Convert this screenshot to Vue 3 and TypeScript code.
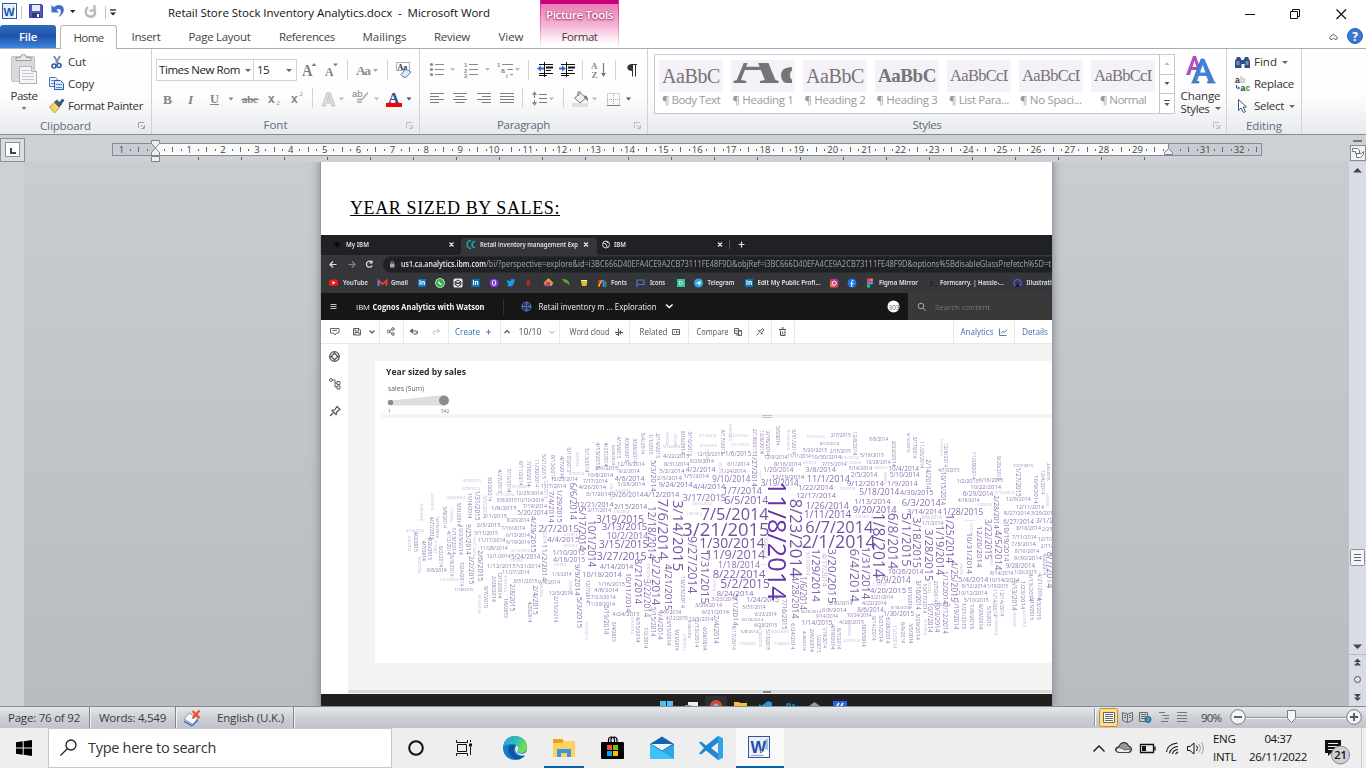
<script setup lang="ts">
type Word = { t: string; x: number; y: number; len: number; v: boolean; size: number; fill: string; weight: number }

// Stretches or tightens the letter spacing so a label takes a given width.
const vFit = {
  mounted(el: HTMLElement, binding: { value: number }) {
    const w = el.getBoundingClientRect().width
    const n = (el.textContent || '').length
    if (n > 0) el.style.letterSpacing = ((binding.value - w) / n).toFixed(3) + 'px'
  },
}

const tabs = [
  { name: 'Insert', w: 29, slot: 58 },
  { name: 'Page Layout', w: 62, slot: 89 },
  { name: 'References', w: 56, slot: 86 },
  { name: 'Mailings', w: 44, slot: 69 },
  { name: 'Review', w: 36, slot: 66 },
  { name: 'View', w: 25, slot: 52 },
]

const styleItems = [
  { sample: 'AaBbC', label: '¶ Body Text', w: 58, cls: 's1', sw: 58 },
  { sample: 'Aa', label: '¶ Heading 1', w: 61, cls: 's2', sw: 82 },
  { sample: 'AaBbC', label: '¶ Heading 2', w: 61, cls: 's1', sw: 58 },
  { sample: 'AaBbC', label: '¶ Heading 3', w: 61, cls: 's3', sw: 58 },
  { sample: 'AaBbCcD', label: '¶ List Para...', w: 60, cls: 's4', sw: 64 },
  { sample: 'AaBbCcD', label: '¶ No Spaci...', w: 62, cls: 's4', sw: 64 },
  { sample: 'AaBbCcD', label: '¶ Normal', w: 46, cls: 's4', sw: 64 },
]

const unit = 33.87
const zero = 155.3
const rulerNums = Array.from({ length: 34 }, (_, i) => i - 1).filter((i) => i !== 0 && i !== 30 && i < 33)
const halves = Array.from({ length: 34 }, (_, i) => zero + (i - 0.5) * unit).filter((x) => x < 1259)
const dots = Array.from({ length: 68 }, (_, i) => zero + (i / 2 - 0.75) * unit).filter((x) => x < 1250)
const tabTicks = Array.from({ length: 23 }, (_, i) => 198.5 + i * 43)

function parse(src: string, v: boolean, faint: boolean): Word[] {
  return src
    .trim()
    .split(/\s*;\s*/)
    .filter(Boolean)
    .map((s) => {
      const [t, x, y, len] = s.split(' ')
      const L = Number(len)
      const em = t.replace(/\//g, '').length * 0.572 + 2 * 0.367
      const fill = faint ? '#c2b7d4' : L > 300 ? '#6533ab' : L > 190 ? '#7650a3' : L > 130 ? '#8160ab' : L > 95 ? '#8a70b2' : '#9079b5'
      return { t, x: Number(x), y: Number(y), len: L, v, size: L / em, fill, weight: L > 300 ? 500 : 400 }
    })
}

const clusters = [
  {
    x: 400,
    words: [
      ...parse(`12/25/2014 347 219 82;5/8/2015 290 242 60;10/10/2014 352 241 80;1/8/2015 273 263 77;7/19/2014 368 259 73;2/1/2015 249 288 72;5/20/2014 352 277 92;8/20/2014 320 302 68;2/3/2015 230 314 72;7/16/2014 303 325 72;3/11/2015 222 340 72;6/13/2014 318 345 72;11/17/2014 234 359 82;6/19/2014 318 367 72;11/28/2014 241 385 82;12/1/2014 260 409 72;5/24/2014 333 411 88;1/12/2015 260 438 87;7/21/2014 347 438 75;11/27/2014 307 457 82;3/31/2015 340 484 72;9/4/2014 414 487 66;11/7/2014 422 199 76;12/23/2014 453 178 80;2/7/2015 415 324 122;4/4/2015 442 358 96;1/10/2015 458 397 97;4/16/2015 460 418 95;1/3/2014 457 462 58;12/3/2014 447 520 72;10/18/2014 547 463 118;10/8/2014 562 165 77;7/17/2014 549 184 74;4/26/2014 536 202 82;3/1/2014 557 222 77;12/21/2014 529 254 112;2/17/2014 563 272 70;3/19/2015 588 297 144;3/13/2015 605 321 137;10/2/2014 620 347 125;3/15/2015 596 373 150;3/27/2015 590 408 150;4/14/2014 600 440 100;1/16/2015 595 492 80;4/8/2014 583 510 72;7/23/2014 572 532 75;11/29/2014 563 553 82;4/24/2015 637 581 82;2/6/2015 585 145 70;9/8/2014 80 450 60;1/18/2015 163 508 58`, false, false),
      ...parse(`4/18/2015 188 183 55;5/28/2014 185 206 55;4/25/2014 140 233 55;4/14/2015 18 332 55;12/3/2014 118 480 58;5/17/2014 288 224 55;3/13/2015 335 199 55;2/13/2014 333 391 56;5/13/2014 492 345 40;5/13/2014 492 378 40;8/9/2014 508 161 45;2/3/2014 330 424 36;2/9/2014 462 435 36`, false, true),
      ...parse(`3/20/2014 270 170 75;4/27/2015 299 148 72;7/10/2014 325 145 72;6/11/2014 362 122 75;7/16/2014 387 122 78;11/30/2014 412 118 84;5/21/2015 433 102 75;9/13/2014 458 104 75;4/7/2014 485 108 68;5/17/2015 508 82 75;6/6/2014 519 188 112;5/13/2014 559 85 72;4/13/2015 594 66 80;4/27/2014 616 68 72;1/31/2015 232 211 90;11/14/2014 208 218 78;5/31/2014 177 248 70;3/9/2014 134 258 66;4/27/2015 94 290 70;12/15/2014 114 288 66;4/26/2015 90 350 70;1/13/2014 163 322 82;10/23/2014 184 315 90;9/25/2014 204 312 92;4/12/2014 145 333 72;4/2/2015 47 335 60;4/7/2014 70 362 60;6/2/2014 122 378 64;6/9/2014 155 405 65;7/24/2014 187 425 75;2/2/2015 214 408 84;2/6/2015 242 390 94;7/4/2014 456 213 95;1/29/2015 479 208 100;4/29/2015 401 288 110;11/2/2014 436 372 112;5/17/2014 548 260 132;10/1/2014 576 300 142;9/9/2014 532 432 95;2/28/2014 282 468 78;12/12/2014 298 456 78;9/7/2015 258 498 66;1/6/2015 318 534 60;2/8/2015 338 492 82;4/29/2014 388 545 62;2/4/2015 407 496 88;2/15/2014 467 528 80;5/3/2015 540 530 94;12/7/2014 562 480 68;5/19/2014 618 555 88;5/4/2015 640 605 60`, true, false),
      ...parse(`2/23/2014 98 220 50;7/26/2014 65 250 52;10/31/2014 222 348 60;2/15/2015 558 605 55;3/1/2015 253 225 60;3/7/2014 437 180 55;5/9/2014 532 95 45;1/1/2014 315 465 50;1/3/2014 153 262 45;6/4/2014 28 348 45;8/4/2014 57 410 50;7/7/2014 105 360 40;8/1/2014 240 525 54;2/6/2014 434 315 55;7/8/2014 510 480 40;1/6/2014 424 490 40`, true, true),
    ],
  },
  {
    x: 600,
    words: [
      ...parse(`12/18/2014 52 131 82;9/2/2014 55 153 64;4/6/2014 44 174 90;1/28/2014 52 192 83;9/26/2014 36 225 95;4/12/2014 132 222 106;2/15/2014 42 259 100;4/22/2015 190 108 78;8/31/2014 192 132 76;5/2/2014 178 152 76;2/3/2014 170 172 76;9/24/2014 176 194 102;8/29/2014 270 124 72;4/2/2014 257 148 90;1/5/2014 250 168 77;4/4/2014 279 199 97;12/13/2015 290 104 80;1/6/2015 375 100 78;6/1/2014 382 131 66;1/24/2014 364 153 74;9/10/2014 337 176 114;1/7/2014 368 212 118;3/17/2015 248 232 130;6/5/2014 373 242 132;7/5/2014 302 282 204;3/21/2015 247 329 262;1/30/2014 298 369 196;11/9/2014 316 404 180;1/18/2014 354 434 126;8/22/2014 338 461 158;5/2/2015 361 491 148;8/24/2014 350 520 110;3/23/2014 333 536 80;1/24/2015 439 539 98;5/31/2014 427 563 70;6/23/2014 464 582 66;10/18/2014 422 599 68;4/28/2015 462 617 70;3/29/2014 284 555 82;6/21/2014 305 576 82;9/6/2014 179 576 65;4/12/2015 198 596 66;12/5/2014 266 598 74;1/20/2014 490 150 90;8/16/2014 522 131 82;12/19/2014 515 170 98;3/19/2014 482 190 114;12/17/2014 588 226 120;12/9/2014 492 112 70;11/11/2014 562 109 70;10/30/2014 634 110 90;5/20/2015 608 91 74;8/12/2014 660 72 58;3/8/2014 616 149 92;11/1/2014 620 175 130;1/22/2014 594 202 106;1/26/2014 617 256 130;1/11/2014 612 283 142;6/7/2014 616 322 204;2/1/2014 605 366 222;8/26/2014 604 573 60;9/14/2014 648 588 66;1/14/2015 605 607 92;5/8/2014 422 635 54`, false, false),
      ...parse(`9/10/2014 298 48 50;4/12/2014 385 48 58;4/12/2014 300 76 50;7/12/2014 392 73 54;5/12/2014 620 50 54;9/18/2014 190 80 50;1/20/2015 415 670 52;3/25/2015 512 636 56;2/18/2014 523 671 46;10/25/2014 275 250 60;1/9/2014 260 282 46;3/4/2014 45 211 45;2/6/2014 40 275 48;1/2/2014 345 226 30;8/2/2014 608 129 40;1/9/2015 480 434 22`, false, true),
      ...parse(`11/8/2014 530 182 360;8/23/2014 587 236 236;5/3/2014 160 120 95;7/6/2014 190 236 184;3/14/2015 236 240 214;12/18/2014 156 258 160;9/27/2014 276 348 172;1/31/2015 314 390 162;2/2/2014 168 412 144;4/21/2015 206 432 140;8/21/2014 114 416 136;3/22/2014 140 478 114;10/11/2014 86 458 120;10/25/2014 250 468 96;1/27/2014 464 100 100;5/1/2014 408 520 98;4/28/2014 586 468 128;1/6/2014 610 468 102;1/29/2014 648 386 160;3/20/2015 697 385 166;7/16/2015 552 538 90;4/15/2015 55 50 65;5/28/2014 40 75 60;3/30/2015 80 52 75;3/26/2014 104 55 75;5/4/2014 128 38 65;1/1/2015 151 42 62;2/14/2015 174 40 75;9/16/2014 248 32 70;3/16/2015 270 34 75;3/17/2015 370 28 75;2/18/2015 466 26 75;12/8/2014 485 30 72;2/16/2014 504 32 76;5/5/2014 533 18 58;5/31/2014 583 28 75;5/15/2014 160 560 90;1/4/2014 182 570 90;6/13/2014 115 592 76;7/2/2014 138 622 62;3/15/2014 207 600 76;1/21/2014 229 626 66;9/30/2014 268 600 54;2/13/2014 290 598 84;6/26/2014 314 622 68;2/4/2014 350 586 86;3/17/2014 402 616 74;5/13/2015 502 628 62;6/24/2014 580 610 78;4/30/2014 614 632 60;2/6/2014 636 626 70;1/2/2015 655 642 56`, true, false),
      ...parse(`4/28/2014 391 12 50;2/6/2015 33 190 50;5/4/2014 202 35 40;3/2/2015 225 42 40;1/2/2014 342 470 44;7/2/2015 320 85 40;8/18/2015 565 30 60;10/8/2014 496 350 65;3/17/2014 622 395 70;4/17/2014 675 400 100;2/3/2015 252 642 50;3/8/2014 145 430 50;5/14/2014 481 620 60;1/5/2014 360 125 36;1/9/2015 482 150 24;6/5/2014 98 592 50`, true, true),
    ],
  },
  {
    x: 820,
    words: [
      ...parse(`2/7/2015 32 45 60;8/8/2014 148 59 56;2/15/2015 30 93 62;5/18/2015 120 105 72;10/28/2014 138 127 74;5/14/2014 86 146 70;2/5/2014 92 164 80;9/12/2014 80 190 112;5/18/2014 118 217 120;1/13/2014 102 244 110;9/20/2014 98 270 132;7/13/2014 6 131 74;10/4/2014 205 145 92;5/10/2014 209 163 90;1/9/2014 202 191 92;4/30/2015 240 217 100;6/3/2014 245 247 118;3/14/2014 262 273 104;1/1/2014 306 310 64;1/28/2015 368 277 122;4/19/2015 355 152 64;1/2/2015 410 183 66;8/16/2015 476 181 74;10/22/2014 451 201 92;6/29/2014 428 220 92;4/18/2014 414 242 64;12/9/2014 558 237 74;12/11/2014 588 261 84;8/27/2014 552 279 78;3/29/2015 632 279 76;6/27/2014 550 304 92;3/1/2015 647 300 90;8/18/2014 589 324 74;7/11/2014 576 352 74;12/7/2015 653 357 76;7/3/2014 574 373 74;2/25/2015 666 329 70;2/11/2014 662 380 70;8/16/2014 584 394 74;9/30/2014 582 414 84;9/28/2014 557 436 88;8/14/2014 510 460 70;1/26/2015 582 458 68;5/4/2014 415 478 90;10/14/2014 506 479 92;8/12/2014 425 498 74;1/18/2015 502 499 62;10/12/2014 414 520 88;5/10/2015 432 541 74;10/26/2014 204 454 106;6/9/2014 168 479 104;4/20/2015 150 512 108;3/21/2014 152 532 68;3/30/2014 26 549 72;4/22/2014 126 549 74;6/8/2014 6 569 74;8/6/2014 112 568 80;10/24/2014 80 586 74;4/28/2015 58 606 74;9/18/2014 212 563 60;1/30/2015 190 582 92;4/19/2014 340 555 52;2/27/2015 580 135 60`, false, false),
      ...parse(`3/5/2014 62 112 54;3/9/2014 105 290 54;5/15/2014 524 217 60;2/27/2015 70 662 50;3/7/2014 60 206 46;1/3/2014 80 127 44;5/6/2014 162 143 40;9/9/2014 305 293 60;2/8/2014 472 255 44;1/5/2015 158 496 40;8/2/2015 436 301 28`, false, true),
      ...parse(`1/8/2014 176 278 196;6/8/2014 218 278 170;5/1/2015 260 278 162;3/18/2015 292 292 152;3/28/2015 326 328 156;1/19/2014 358 316 150;1/25/2014 390 282 148;4/25/2015 402 424 122;1/12/2014 377 452 100;6/4/2014 104 386 160;1/31/2014 138 380 158;12/8/2014 103 34 72;2/22/2014 222 62 78;5/16/2015 267 38 60;5/17/2014 285 50 65;11/20/2014 305 64 82;2/14/2014 324 118 90;12/9/2014 379 68 74;10/15/2014 370 155 100;11/29/2014 462 95 84;9/20/2015 537 108 74;1/27/2015 594 142 88;10/9/2014 648 165 86;12/4/2014 668 150 74;4/5/2015 687 130 52;2/28/2014 530 226 100;4/5/2014 535 330 122;10/19/2014 560 310 114;3/22/2015 504 296 122;12/20/2014 480 318 124;10/31/2014 448 338 124;11/14/2014 526 506 84;12/14/2014 547 508 82;9/13/2014 583 480 92;1/23/2014 609 482 86;4/13/2014 633 460 84;4/21/2014 661 458 84;8/7/2014 692 395 110;1/21/2015 433 548 80;1/9/2015 458 552 76;8/29/2014 483 552 76;5/5/2015 507 558 62;3/16/2014 294 480 90;3/29/2014 294 580 80;10/17/2014 314 490 90;10/7/2014 330 548 90;10/3/2014 353 545 92;7/12/2014 376 552 90;1/19/2014 409 540 88;9/14/2014 161 588 74;5/21/2014 183 586 80;6/28/2014 203 592 78;6/9/2014 250 606 64;3/5/2014 272 610 60;8/7/2014 58 624 64;4/19/2014 38 612 76;1/19/2014 14 620 64;10/5/2014 131 612 68;9/11/2015 268 500 66;2/7/2014 348 482 66;4/2/2014 676 400 66;4/3/2015 657 530 70;3/13/2015 634 530 70`, true, false),
      ...parse(`1/17/2015 363 55 55;11/1/2014 223 615 70;4/27/2014 612 570 50;4/17/2015 584 560 60;9/10/2014 530 585 60;10/6/2014 315 595 50;2/9/2015 194 155 36;1/5/2014 452 308 34;9/3/2014 422 430 34;5/2/2014 514 400 36;7/6/2014 328 480 40;9/8/2014 88 612 36;3/8/2015 680 220 40`, true, true),
    ],
  },
]

const pageCaption = 'YEAR SIZED BY SALES:'
</script>

<template>
  <div class="word">
    <header class="top">
      <div class="titlebar">
        <svg class="qat" width="124" height="25" viewBox="0 0 124 25">
          <rect x="2.500" y="3.500" width="14" height="15" fill="#fff" stroke="#2a5ca8" />
          <path d="M3 4h11v14H3z" fill="#e6effb" /><path d="M13.500 6v10" stroke="#9fb9e0" />
          <text x="3.500" y="15.500" font-family="Liberation Sans" font-weight="700" font-size="11.500" textLength="11" lengthAdjust="spacingAndGlyphs" fill="#1d56b0">W</text>
          <path d="M21.500 6v13M105.500 6v13" stroke="#c3c3c3" />
          <path d="M29.500 4.500h12l1 1v12h-13z" fill="#5358c4" stroke="#3b3f9c" />
          <rect x="32" y="5" width="8" height="6" fill="#e8ebfa" />
          <rect x="32" y="13" width="8" height="4" fill="#333a6c" /><rect x="37" y="14" width="2" height="3" fill="#fff" />
          <path d="M51.500 5v7.500h7.500l-2.500-2.500c2.500-2.500 5.500 0 4 3.800l-2 3.200c5.500-2.500 7-8.500 3.500-11-2.500-1.700-5.800-1-8 1.300z" fill="#3f6fcd" />
          <path d="M70 10h5.500l-2.800 3z" fill="#222" />
          <path d="M94.500 5v5.500h-5M94 10c3 4-1 7.500-4.500 6.500-4.500-1-5-6-1.500-9.500" fill="none" stroke="#b9b9b9" stroke-width="2.400" />
          <path d="M110 10h6" stroke="#222" stroke-width="1.300" /><path d="M110 12.500h6l-3 3z" fill="#222" />
        </svg>
        <span v-fit="322" class="doc-title">Retail Store Stock Inventory Analytics.docx&nbsp; -&nbsp; Microsoft Word</span>
        <svg class="winctl" width="116" height="25" viewBox="1238 0 116 25" fill="none" stroke="#111">
          <path d="M1245 14.500h10" /><path d="M1290.500 11.500h7v7h-7zM1292.500 11v-1.500h7v7h-1.500" /><path d="M1336.500 9.500l9.500 9.500M1346 9.500l-9.500 9.500" stroke-width="1.200" />
        </svg>
      </div>
      <nav class="tabs">
        <div class="file"><span v-fit="18" class="semi">File</span></div>
        <div class="home"><span v-fit="30">Home</span></div>
        <div v-for="t in tabs" :key="t.name" class="tab" :style="{ width: t.slot + 'px' }"><span v-fit="t.w">{{ t.name }}</span></div>
        <svg class="help" width="42" height="22" viewBox="1324 25 42 22">
          <path d="M1329.500 37.500l4-3.500 4 3.500q-.5 2.500-2.500 2l-1.500-1.500-1.500 1.500q-2 .5-2.500-2z" fill="none" stroke="#555" />
          <circle cx="1355" cy="36" r="7.500" fill="#3b78d0" stroke="#2a5eb0" />
          <text x="1355" y="40.500" text-anchor="middle" font-family="Open Sans" font-weight="700" font-size="12" fill="#fff">?</text>
        </svg>
      </nav>
      <div class="pictools">
        <span v-fit="67" class="pt semi">Picture Tools</span>
        <span v-fit="36" class="fm">Format</span>
      </div>
    </header>

    <section class="ribbon">
      <div class="group clip">
        <div class="body">
          <div class="paste">
            <svg width="28" height="32" viewBox="11 53 28 32">
              <rect x="12.500" y="56.500" width="23" height="25" rx="1.500" fill="#dcd9dc" stroke="#c6c3c6" />
              <path d="M17 60.500v-3h4.500q0-3 3-3t3 3H32v3z" fill="#e9e7e9" stroke="#9d9a9d" />
              <path d="M20.500 66.500h12l5 5v12h-17z" fill="#f7f5f7" stroke="#b5b2b5" /><path d="M32.500 66.500v5h5" fill="#ddd" stroke="#b5b2b5" />
              <path d="M23 70.500h8M23 73.500h12M23 76.500h12M23 79.500h12" stroke="#c9c5cc" />
            </svg>
            <span v-fit="27">Paste</span>
            <svg width="6" height="4" viewBox="0 0 6 4"><path d="M.5 0h5L3 3z" fill="#777" /></svg>
          </div>
          <div class="cmds">
            <div class="cmd">
              <svg width="16" height="16" viewBox="49 54 16 16"><path d="M54 56l4 7M60 56l-4 7" stroke="#7d8ba0" stroke-width="1.800" /><circle cx="54" cy="66" r="2" fill="none" stroke="#2c5aa8" stroke-width="1.600" /><circle cx="59" cy="65.500" r="2" fill="none" stroke="#2c5aa8" stroke-width="1.600" /></svg>
              <span v-fit="18">Cut</span>
            </div>
            <div class="cmd">
              <svg width="16" height="16" viewBox="49 76 16 16"><path d="M49.500 77.500h6l2 2v7h-8z" fill="#eaf2fd" stroke="#4a76b8" /><path d="M54.500 80.500h6l3 3v6h-9z" fill="#dce9fa" stroke="#2c5aa8" /><path d="M51 80.500h3M51 83.500h3M56 84.500h6M56 87.500h6" stroke="#5c8bd0" /></svg>
              <span v-fit="26">Copy</span>
            </div>
            <div class="cmd">
              <svg width="16" height="16" viewBox="49 98 16 16"><path d="M49.500 107l5-4.500 5 5-5 5.500z" fill="#f3d56b" stroke="#b28b21" stroke-width=".8" /><path d="M54 102l3-2.500 5 5-3 3z" fill="#555b66" /><path d="M59 102.500l3.500-4 2 2-3.500 4z" fill="#31539a" /></svg>
              <span v-fit="75">Format Painter</span>
            </div>
          </div>
        </div>
        <div class="glabel"><span v-fit="51">Clipboard</span></div>
        <svg class="launch" width="8" height="8" viewBox="0 0 8 8"><path d="M.5 6V.5H6M3 3l3 3M6.500 3v3.500H3" fill="none" stroke="#a0a5ab" /></svg>
      </div>

      <div class="group font">
        <div class="body col">
          <div class="frow">
            <div class="combo c1"><span v-fit="81">Times New Rom</span><i class="car"></i></div>
            <div class="combo c2"><span v-fit="12">15</span><i class="car"></i></div>
            <svg width="121" height="24" viewBox="298 58 121 24" font-family="Liberation Serif" fill="#808080">
              <text x="302" y="76" font-size="16" font-weight="700" textLength="10.500" lengthAdjust="spacingAndGlyphs">A</text><path d="M311.500 66l2.500-3 2.500 3z" />
              <text x="325" y="76" font-size="12" font-weight="700" textLength="8.500" lengthAdjust="spacingAndGlyphs">A</text><path d="M333 63.500l2.500 3 2.500-3z" />
              <path d="M347.500 60v20M387.500 60v20" stroke="#d2d4d8" />
              <text x="356" y="75" font-size="13.500" font-weight="700" fill="#8f8f8f" textLength="15">Aa</text><path d="M373 69h5l-2.500 3z" fill="#a5a5a5" />
              <rect x="396.500" y="62.500" width="13" height="8" fill="#fff" stroke="#9bb0d0" /><text x="397.500" y="69.500" font-size="8" font-weight="700" fill="#333">Aa</text>
              <path d="M401 74.500l5-5.500 5 3-5 5.500q-4 0-5-3z" fill="#dbe8fa" stroke="#5d7cae" />
            </svg>
          </div>
          <svg width="263" height="28" viewBox="156 84 263 28" font-family="Liberation Serif" fill="#858585">
            <text x="163" y="103.500" font-size="13.500" font-weight="700">B</text>
            <text x="188" y="103.500" font-size="13.500" font-style="italic" font-weight="700">I</text>
            <text x="210" y="102.500" font-size="12.500" font-weight="700">U</text><path d="M210 104.500h9" stroke="#858585" />
            <path d="M228.500 97.500h5l-2.500 3z" />
            <text x="242" y="103" font-size="11" font-weight="700" textLength="16">abc</text><path d="M241 99.500h18" stroke="#858585" />
            <text x="268" y="103" font-size="12" font-weight="700" font-family="Liberation Sans">x</text><text x="276.500" y="105" font-size="6.500">2</text>
            <text x="291" y="103" font-size="12" font-weight="700" font-family="Liberation Sans">x</text><text x="299.500" y="96" font-size="6.500">2</text>
            <path d="M312.500 88v20" stroke="#d2d4d8" />
            <text x="322" y="105.500" font-size="18" font-family="Liberation Sans" font-weight="700" fill="#f4f4f4" stroke="#c4c2c6" stroke-width="1.200">A</text><path d="M339 97.500h5l-2.500 3zM374 97.500h5l-2.500 3z" fill="#bbb" />
            <text x="352" y="97" font-size="9.500" font-family="Liberation Sans">ab</text><path d="M357 99.500h5l6-7M357 102h5" fill="none" stroke="#a8a8a8" stroke-width="1.400" />
            <text x="388" y="102.500" font-size="15.500" font-weight="700" fill="#2f5496">A</text><rect x="386" y="103" width="16" height="4" fill="#f00" />
            <path d="M406.500 97.500h5l-2.500 3z" fill="#555" />
          </svg>
        </div>
        <div class="glabel"><span v-fit="24">Font</span></div>
        <svg class="launch" width="8" height="8" viewBox="0 0 8 8"><path d="M.5 6V.5H6M3 3l3 3M6.500 3v3.500H3" fill="none" stroke="#b9bdc2" /></svg>
      </div>

      <div class="group para">
        <div class="body col">
          <svg width="227" height="28" viewBox="420 56 227 28" fill="#8a8a8a" stroke="none">
            <path d="M435 64.500h9M435 69.500h9M435 74.500h9M469 64.500h9M469 69.500h9M469 74.500h9M502 64.500h11M507 69.500h6M510 74.500h3" stroke="#8a8a8a" />
            <circle cx="431.500" cy="64.500" r="1.600" /><circle cx="431.500" cy="69.500" r="1.600" /><circle cx="431.500" cy="74.500" r="1.600" />
            <g font-family="Liberation Sans" font-size="6" font-weight="700"><text x="464" y="67">1</text><text x="464" y="72.500">2</text><text x="464" y="78">3</text><text x="497" y="67">1</text><text x="501" y="72.500" font-size="7">a</text><text x="506" y="78">i</text></g>
            <path d="M450 68h5l-2.500 3zM485 68h5l-2.500 3zM515 68h5l-2.500 3z" fill="#bbb" />
            <path d="M528.500 60v20M582.500 60v20M615.500 60v20" stroke="#d2d4d8" />
            <path d="M539 64.500h14M546 67.500h7M546 70.500h5M539 73.500h14M539 75.500h8M544.500 62v15" stroke="#111" /><path d="M546 67.500h7" stroke="#111" stroke-width="2" /><path d="M537 68.500l4-3v2h3v2h-3v2z" fill="#2f6fd8" />
            <path d="M561 64.500h14M568 67.500h7M568 70.500h5M561 73.500h14M561 75.500h8M566.500 62v15" stroke="#111" /><path d="M568 67.500h7" stroke="#111" stroke-width="2" /><path d="M566 68.500l-4-3v2h-3v2h3v2z" fill="#2f6fd8" />
            <g font-family="Liberation Serif" font-size="9" font-weight="700"><text x="591" y="69">A</text><text x="591.500" y="77.500">Z</text></g>
            <path d="M603.500 63v12" stroke="#777" stroke-width="1.200" /><path d="M601 73h5l-2.500 4z" fill="#777" />
            <path d="M631 64.500h6M632.500 64.500v12M635.500 64.500v12" stroke="#333" /><path d="M632.500 64c-7 0-7 7 0 7z" fill="#333" />
          </svg>
          <svg width="227" height="28" viewBox="420 84 227 28">
            <path d="M430 93.500h14M430 96.500h9M430 99.500h14M430 102.500h9M453 93.500h14M455.500 96.500h9M453 99.500h14M455.500 102.500h9M477 93.500h14M482 96.500h9M477 99.500h14M482 102.500h9M500 93.500h14M500 96.500h14M500 99.500h14M500 102.500h14M539 94.500h8M539 98.500h8M539 102.500h8" stroke="#7d7d7d" stroke-width="1.100" />
            <path d="M522.500 88v20M563.500 88v20" stroke="#d2d4d8" />
            <path d="M534.500 93v12" stroke="#8a8a8a" stroke-dasharray="5 2" /><path d="M532 95l2.500-4 2.500 4zM532 102l2.500 4 2.500-4z" fill="#8a8a8a" />
            <path d="M549 97.500h5l-2.500 3zM592 97.500h5l-2.500 3z" fill="#bbb" />
            <path d="M574.500 98l6-5 5.500 5-6 5z" fill="#efefef" stroke="#777" /><path d="M578 96v-4h3" fill="none" stroke="#777" /><path d="M585 95q4 2 2.500 7-1.500-4-3.500-4z" fill="#777" /><rect x="572" y="103" width="16" height="4" fill="#e3dfe5" />
            <path d="M607.500 93.500h12v12h-12zM613.500 93v12M607 99.500h13" fill="none" stroke="#a5a5a5" stroke-dasharray="1 1" /><path d="M607 105.500h13" stroke="#777" />
            <path d="M626 97.500h5l-2.500 3z" fill="#555" />
          </svg>
        </div>
        <div class="glabel"><span v-fit="53">Paragraph</span></div>
        <svg class="launch" width="8" height="8" viewBox="0 0 8 8"><path d="M.5 6V.5H6M3 3l3 3M6.500 3v3.500H3" fill="none" stroke="#b9bdc2" /></svg>
      </div>

      <div class="group styles">
        <div class="body">
          <div class="gallery">
            <div v-for="(s, i) in styleItems" :key="i" class="sitem">
              <div class="swatch">
                <svg v-if="s.cls === 's2'" class="big" width="59" height="20" viewBox="0 0 59 20"><text x="0" y="20" font-family="Liberation Serif" font-weight="700" font-size="60" fill="#757575" textLength="78" lengthAdjust="spacingAndGlyphs">{{ s.sample }}</text></svg>
                <span v-else v-fit="s.sw" :class="s.cls">{{ s.sample }}</span>
              </div>
              <span v-fit="s.w" class="slabel">{{ s.label }}</span>
            </div>
            <div class="gscroll">
              <div class="gb"><svg width="6" height="4"><path d="M.5 3h5L3 0z" fill="#bbb" /></svg></div>
              <div class="gb"><svg width="6" height="4"><path d="M.5 0h5L3 3z" fill="#555" /></svg></div>
              <div class="gb"><svg width="8" height="7"><path d="M1 .5h6" stroke="#555" /><path d="M1.500 3h5L4 6z" fill="#555" /></svg></div>
            </div>
          </div>
          <div class="change">
            <svg width="32" height="30" viewBox="1184 55 32 30">
              <path d="M1185 75l7-19h3l6.500 19h-4l-1.500-5h-5.500l-1.500 5z" fill="#b14fbd" /><path d="M1191.500 67h4l-2-6.500z" fill="#fff" />
              <path d="M1190.500 83l1-1.500 8.500-22.500h3l10 22.500 1.500 1.500h-8v-1.500h1.500l-2.500-6h-8l-2 6h2.500v1.500z" fill="#3e82dc" stroke="#2f62ad" stroke-width=".6" /><path d="M1199 72.500h5.500l-2.800-7.500z" fill="#fff" />
            </svg>
            <span v-fit="40">Change</span>
            <span class="chl"><b v-fit="29">Styles</b><i class="car"></i></span>
          </div>
        </div>
        <div class="glabel"><span v-fit="29">Styles</span></div>
        <svg class="launch" width="8" height="8" viewBox="0 0 8 8"><path d="M.5 6V.5H6M3 3l3 3M6.500 3v3.500H3" fill="none" stroke="#b9bdc2" /></svg>
      </div>

      <div class="group edit">
        <div class="body">
          <div class="cmds">
            <div class="cmd">
              <svg width="16" height="16" viewBox="1234 54 16 16"><path d="M1235 61l2-4h3l1.500 3h2l1.500-3h3l2 4v7h-5.500v-4h-3v4h-6.500z" fill="#2f4f8c" /><path d="M1236.500 62h3M1236.500 64h3M1245.500 62h3M1245.500 64h3" stroke="#b9cdec" /></svg>
              <span v-fit="23">Find</span><i class="car"></i>
            </div>
            <div class="cmd">
              <svg width="16" height="16" viewBox="1234 76 16 16" font-family="Liberation Sans" font-weight="700" font-size="8.500"><text x="1235" y="83" fill="#333">a</text><text x="1240" y="83" fill="#bbb">b</text><text x="1240.500" y="91" fill="#333">a</text><text x="1245.500" y="91" fill="#2a9a2a">c</text><path d="M1236.500 85v3h3M1238 86.500l1.500 1.500-1.500 1.500" fill="none" stroke="#2c5aa8" /></svg>
              <span v-fit="40">Replace</span>
            </div>
            <div class="cmd">
              <svg width="16" height="16" viewBox="1234 98 16 16"><path d="M1238.500 99.500v11l2.500-2.500 2.500 4.500 2-1-2.500-4.500h3.500z" fill="#fff" stroke="#3d567f" /></svg>
              <span v-fit="30">Select</span><i class="car"></i>
            </div>
          </div>
        </div>
        <div class="glabel"><span v-fit="36">Editing</span></div>
      </div>
    </section>

    <main class="work">
      <svg class="ruler" width="1349" height="27" viewBox="0 135 1349 27" font-family="Open Sans" font-size="9.500" fill="#444">
        <rect x=".5" y="138.500" width="24" height="23" fill="#d9dce0" stroke="#8a9099" /><rect x="5.500" y="142.500" width="14" height="14" fill="#fff" stroke="#8a9099" /><path d="M11 148v5h5" fill="none" stroke="#444" stroke-width="2" />
        <rect x="112.500" y="143.500" width="1149" height="12" fill="#c9cdd3" stroke="#868c94" />
        <rect x="155" y="144" width="1013" height="11" fill="#fafafa" />
        <path d="M1168.500 144v11" stroke="#868c94" />
        <text v-for="n in rulerNums" :key="n" :x="zero + n * unit" y="153" text-anchor="middle">{{ Math.abs(n) }}</text>
        <path v-for="x in halves" :key="'h' + x" :d="`M${Math.round(x) + 0.5} 147v5`" stroke="#666" />
        <rect v-for="x in dots" :key="'d' + x" :x="Math.round(x)" y="149" width="1" height="2" fill="#666" />
        <path v-for="x in tabTicks" :key="'t' + x" :d="`M${x} 157v3`" stroke="#666" />
        <path d="M151.500 140.500h8v3l-4 4.500-4-4.500zM151.500 155.500v-3l4-4.500 4 4.500v3zM151.500 156.500h8v5h-8zM1164.500 154.500v-2l4-4 4 4v2z" fill="#eceef0" stroke="#7d838b" />
      </svg>
      <div class="canvas">
        <div class="vruler"></div>
        <div class="desk">
          <article class="page">
            <h1><span v-fit="210">{{ pageCaption }}</span></h1>
            <svg class="shot" width="731" height="471" viewBox="321 235 731 471" font-family="Open Sans">
              <rect x="321" y="235" width="731" height="471" fill="#f3f3f3" />
              <rect x="321" y="235" width="731" height="20" fill="#202124" />
              <path d="M458 255q3 0 3-4v-10q0-3 3-3h130q3 0 3 3v10q0 4 3 4z" fill="#35363a" />
              <rect x="321" y="255" width="731" height="38" fill="#35363a" />
              <path d="M391 256.500h661v16H391a8 8 0 0 1 0-16z" fill="#202124" />
              <rect x="321" y="293" width="731" height="27" fill="#161616" /><rect x="908" y="293" width="144" height="27" fill="#393939" />
              <rect x="321" y="320" width="731" height="23" fill="#fff" /><rect x="321" y="343" width="27" height="351" fill="#fff" />
              <path d="M321 343.500h731M379.500 321v22M403.500 321v22M448.500 321v22M500.500 321v22M559.500 321v22M629.500 321v22M688.500 321v22M748.500 321v22M771.500 321v22M794.500 321v22M953.500 321v22M1014.500 321v22" stroke="#e8e8e8" />
              <g font-size="7.500" fill="#dfe1e4" font-weight="600" font-family="Noto Sans">
                <text x="346" y="247" textLength="23" lengthAdjust="spacingAndGlyphs">My IBM</text><text x="480" y="247" textLength="98" lengthAdjust="spacingAndGlyphs">Retail inventory management Exp</text><text x="614" y="247" textLength="12" lengthAdjust="spacingAndGlyphs">IBM</text>
                <text x="401" y="267.200" font-size="8.300" textLength="85" lengthAdjust="spacingAndGlyphs">us1.ca.analytics.ibm.com</text>
                <text x="486" y="267.200" font-size="8.300" font-weight="400" fill="#9aa0a6" textLength="565" lengthAdjust="spacingAndGlyphs">/bi/?perspective=explore&amp;id=i3BC666D40EFA4CE9A2CB73111FE48F9D&amp;objRef=i3BC666D40EFA4CE9A2CB73111FE48F9D&amp;options%5BdisableGlassPrefetch%5D=t</text>
                <text x="343" y="285.300" textLength="25" lengthAdjust="spacingAndGlyphs">YouTube</text><text x="391" y="285.300" textLength="17" lengthAdjust="spacingAndGlyphs">Gmail</text><text x="611" y="285.300" textLength="16" lengthAdjust="spacingAndGlyphs">Fonts</text><text x="650" y="285.300" textLength="15" lengthAdjust="spacingAndGlyphs">Icons</text><text x="707.500" y="285.300" textLength="27" lengthAdjust="spacingAndGlyphs">Telegram</text><text x="757.500" y="285.300" textLength="63" lengthAdjust="spacingAndGlyphs">Edit My Public Profi...</text><text x="879" y="285.300" textLength="39" lengthAdjust="spacingAndGlyphs">Figma Mirror</text><text x="940" y="285.300" textLength="64" lengthAdjust="spacingAndGlyphs">Formcarry. | Hassle-...</text><text x="1026.500" y="285.300" textLength="29" lengthAdjust="spacingAndGlyphs">Illustratio</text>
              </g>
              <g stroke="#dfe1e5" stroke-width="1.200" fill="none">
                <path d="M449.500 242.500l4 4M453.500 242.500l-4 4M584 242.500l4 4M588 242.500l-4 4M718 242.500l4 4M722 242.500l-4 4M738.500 244.500h6M741.500 241.500v6" />
                <path d="M336.500 264.500h-6M333 261.500l-3 3 3 3M371.500 262a3 3 0 1 0 .6 3.500M372 260.500v2.500h-2.500" /><path d="M348.500 264.500h6M352 261.500l3 3-3 3" stroke="#85878b" /><path d="M729.500 240v9" stroke="#50525a" stroke-width="1" />
              </g>
              <path d="M333 244.500l4-3 4 3-4 3z" fill="#0c0d0e" /><path d="M471 240.500a4 4 0 1 0 0 8M475 241.500a3 3 0 0 0 0 6" fill="none" stroke="#1aa9b8" stroke-width="1.500" />
              <circle cx="606" cy="244.500" r="3.500" fill="none" stroke="#d0d2d6" /><path d="M603 243l3 1 1 3M606 241l2 2" stroke="#d0d2d6" fill="none" />
              <rect x="390" y="263.500" width="4.500" height="4" fill="#a5a8ad" /><path d="M391 263.500v-1.500q1.200-1.500 2.500 0v1.500" fill="none" stroke="#a5a8ad" stroke-width=".8" />
              <rect x="329" y="279.500" width="9" height="6.500" rx="2" fill="#f21818" /><path d="M332.500 281v3.500l3-1.700z" fill="#fff" />
              <path d="M378.500 286v-5.500l4 3.500 4-3.500v5.500" fill="none" stroke="#e34133" stroke-width="1.800" /><path d="M378.500 286v-5" stroke="#4285f4" stroke-width="1.800" />
              <g font-size="6.500" font-weight="700" fill="#fff"><rect x="418" y="279" width="8" height="8" fill="#0a77b5" /><text x="419" y="285.300">in</text><rect x="471.500" y="279" width="8" height="8" fill="#0a77b5" /><text x="472.500" y="285.300">in</text><rect x="745" y="279" width="8" height="8" fill="#0a77b5" /><text x="746" y="285.300">in</text></g>
              <circle cx="440" cy="283" r="4.800" fill="#eafff0" /><circle cx="440" cy="283" r="4" fill="#25b34b" /><path d="M438.500 281.500q.5 2.500 3 3" stroke="#fff" fill="none" stroke-width="1.300" />
              <rect x="453.500" y="278.500" width="9" height="9" rx="1.500" fill="#eee" /><path d="M458 280l3 2v2.500l-3 2-3-2V282zM455 282l6 2.500M461 282l-6 2.500" fill="none" stroke="#222" stroke-width=".9" />
              <circle cx="494" cy="283" r="4.300" fill="#8b3fe0" /><rect x="492.500" y="280.500" width="3" height="4.500" rx="1" fill="none" stroke="#fff" stroke-width=".8" />
              <path d="M507 285.500c4 2.500 7.500-.5 7.500-5l1-1.200-2 .2c-2-1.500-3 0-2.700 1.500-2 0-3-.7-3.800-1.600 0 2 0 3 1.700 4.500z" fill="#1d9bf0" />
              <path d="M527 279l3 1v4l-1.500 3-2-2z" fill="#b02a25" /><path d="M543.500 283l5-5 5 5-2 3h-6z" fill="#d6a53a" /><circle cx="548" cy="284" r="2.500" fill="#c43d8a" />
              <path d="M562 279q7-1 8 7-2-3-6-4z" fill="#5ba63c" /><path d="M581 281h6.500l-1 5h-4.500z" fill="#e2bd32" /><path d="M581 280.500h6" stroke="#eee" />
              <path d="M598 280h4.500l-2.500 3v4h-1.500z" fill="#e5322d" /><path d="M602 280l-3.500 6.500" stroke="#fbbc04" stroke-width="1.500" /><path d="M602.500 280h2v7h-2z" fill="#4285f4" /><path d="M605 281.500q2 1 0 2.500 2.500 1.500 0 3" stroke="#35a853" stroke-width="1.300" fill="none" />
              <path d="M637 287v-7h7v4.500h-6.500" fill="none" stroke="#4878c8" stroke-width="1.200" /><rect x="677" y="279" width="8" height="8" fill="#3cc2a7" /><text x="678.500" y="285" font-size="6" fill="#fff">D</text>
              <circle cx="698.500" cy="283" r="4.600" fill="#2ca5e0" /><path d="M696 283l5-2.200-1 4.700-1.700-1.500z" fill="#fff" />
              <defs><linearGradient id="ig" x1="0" y1="1" x2="1" y2="0"><stop offset="0" stop-color="#f9a33a" /><stop offset=".5" stop-color="#e0306c" /><stop offset="1" stop-color="#9a35c8" /></linearGradient></defs>
              <rect x="830" y="279" width="8.500" height="8.500" rx="2" fill="url(#ig)" /><circle cx="834.300" cy="283.200" r="2" fill="none" stroke="#fff" /><circle cx="852" cy="283" r="4.500" fill="#1877f2" /><path d="M853.500 280.500h-.8q-1 0-1 1v5.500M850.500 283.500h3" stroke="#fff" fill="none" />
              <rect x="867" y="278.500" width="3" height="3" fill="#f24e1e" /><rect x="870" y="278.500" width="3" height="3" fill="#ff7262" /><rect x="867" y="281.500" width="3" height="3" fill="#a259ff" /><circle cx="871.500" cy="283" r="1.500" fill="#1abcfe" /><rect x="867" y="284.500" width="3" height="3" fill="#0acf83" />
              <text x="930" y="286" font-size="7" fill="#111">f.</text><circle cx="1017.500" cy="283" r="3.500" fill="none" stroke="#5a4be0" stroke-width="1.600" /><path d="M1015 287l2.500-3 2.500 3z" fill="#111" />
              <path d="M330.500 304.500h6M330.500 306.500h6M330.500 308.500h6" stroke="#c6c6c6" />
              <g fill="#f4f4f4" font-size="8"><text x="356" y="309.500" textLength="14" lengthAdjust="spacingAndGlyphs">IBM</text><text x="372.500" y="309.500" font-weight="700" textLength="112" lengthAdjust="spacingAndGlyphs">Cognos Analytics with Watson</text><text x="538.500" y="309.500" font-size="8.300" font-weight="500" textLength="118" lengthAdjust="spacingAndGlyphs">Retail inventory m ... Exploration</text><text x="935" y="309.800" fill="#757575" textLength="55" lengthAdjust="spacingAndGlyphs">Search content</text></g>
              <path d="M503.500 299v16" stroke="#333" /><circle cx="526.500" cy="306.500" r="4.500" fill="none" stroke="#5b86e0" /><path d="M526.500 303l3.500 3.500-3.500 3.500-3.500-3.500zM526.500 302v9M522 306.500h9" fill="none" stroke="#5b86e0" stroke-width=".8" />
              <path d="M666 304.500l3.300 3 3.300-3" fill="none" stroke="#fff" stroke-width="1.500" /><circle cx="893.500" cy="306.500" r="6" fill="#fff" /><text x="888.500" y="309.500" font-size="7.500" fill="#5b6a80" textLength="11" lengthAdjust="spacingAndGlyphs">303</text>
              <circle cx="921" cy="306" r="2.800" fill="none" stroke="#aaa" /><path d="M923 308l3 3" stroke="#aaa" />
              <g fill="none" stroke="#525252" stroke-width=".9">
                <path d="M330.500 328.500h8.500v4.500h-2.500l-1.500 2-1.500-2h-3zM332.500 330.500h4.500" /><path d="M353.500 328.500h5.500l1.500 1.500v5h-7zM355 328.500v2.500h3.500v-2.500M355 335v-2.500h4v2.500" /><path d="M369.500 330.500l2.500 2.500 2.500-2.500" stroke-width="1.200" />
                <circle cx="388.500" cy="331.500" r="1.300" /><circle cx="393" cy="329" r="1.300" /><circle cx="393" cy="334" r="1.300" /><path d="M389.500 331l2.500-1.500M389.500 332l2.500 1.500" />
                <path d="M413 329l-2.500 2 2.500 2M410.500 331h5q2 0 2 1.500t-2 1.500h-2" stroke-width="1.200" /><path d="M437 329l2.500 2-2.500 2M439.500 331h-5q-1.500 0-1.500 1.500t2 1.500" stroke="#bbb" />
                <path d="M504.500 333l2.500-2.500 2.500 2.500" stroke-width="1.200" /><path d="M549.500 331l2.500 2.500 2.500-2.500" stroke="#999" />
                <path d="M615 332.500h8M618.500 328.500v7.500M620.500 330.500v4M616 334.500h2.500" stroke-width="1.100" /><path d="M672.500 329.500h7v5h-7zM674.500 333v-1.500M676.500 333v-2.500M678 333v-1.500" /><path d="M734.500 328.500h4v5h-4zM738.500 330.500h3v5h-3zM735 331h6M736 335h4" />
                <path d="M756.500 335.500l2.500-2.500M758 330.500l4 3.500M758.500 331l2.500-.5 1.500-2 1.500 1.500-2 2v2.500" /><path d="M779 329.500h7M780.500 330.500v5h4.500v-5M781.500 328h2.500M782.700 331.500v3" stroke-width="1" />
                <path d="M486 332h5M488.500 329.500v5" stroke="#3d70b2" /><path d="M999.500 328.500v7h7M1001 333.500l2-2.500 1.500 1.500 2.500-3" stroke="#3d70b2" />
                <circle cx="334.500" cy="356.500" r="4.800" stroke-width="1.200" /><path d="M334.500 353l3.500 3.500-3.500 3.500-3.500-3.500zM334.500 351.500v3M334.500 358.500v3M329.500 356.500h3M336.500 356.500h3" stroke-width="1.100" />
                <circle cx="331" cy="380" r="1.500" /><path d="M332.500 380h2.500v7h2M335 383h2M337 381.500h3v3h-3zM337 386h3v3h-3z" /><path d="M330 416l3-3M331.500 410l5 5M332 410.500l3-1 2-3 3 3-3 2-1 3" stroke-width="1.200" />
              </g>
              <g font-size="8.300" fill="#505050"><text x="455" y="334.500" fill="#3d70b2" textLength="25" lengthAdjust="spacingAndGlyphs">Create</text><text x="518.500" y="334.500" font-size="9" textLength="23" lengthAdjust="spacingAndGlyphs">10/10</text><text x="569.500" y="334.500" textLength="40" lengthAdjust="spacingAndGlyphs">Word cloud</text><text x="639.500" y="334.500" textLength="28" lengthAdjust="spacingAndGlyphs">Related</text><text x="696.500" y="334.500" textLength="32" lengthAdjust="spacingAndGlyphs">Compare</text><text x="960.500" y="334.500" fill="#3d70b2" textLength="33" lengthAdjust="spacingAndGlyphs">Analytics</text><text x="1022" y="334.500" fill="#3d70b2" textLength="26" lengthAdjust="spacingAndGlyphs">Details</text></g>
              <rect x="375" y="361" width="677" height="302" fill="#fff" />
              <text x="386" y="375" font-size="9" font-weight="700" fill="#2d2d2d" textLength="80" lengthAdjust="spacingAndGlyphs">Year sized by sales</text>
              <text x="388" y="391" font-size="7.200" fill="#666" textLength="36" lengthAdjust="spacingAndGlyphs">sales (Sum)</text>
              <path d="M391 400.500l53-5.500v10.500h-53z" fill="#dedede" /><circle cx="390.500" cy="402.500" r="2.700" fill="#8c8c8c" /><circle cx="444" cy="400.500" r="5" fill="#8c8c8c" />
              <text x="388" y="412.500" font-size="4.800" fill="#777">1</text><text x="441" y="412.500" font-size="4.800" fill="#777">542</text>
              <rect x="382" y="414" width="670" height="4" fill="#f4f4f4" /><path d="M762 415.500h10M762 417.500h10" stroke="#c0c0c0" />
              <g v-for="c in clusters" :key="c.x" :transform="`translate(${c.x} 420) scale(.33333)`">
                <text v-for="(w, i) in c.words" :key="i" :transform="w.v ? `translate(${w.x} ${w.y}) rotate(90)` : `translate(${w.x} ${w.y})`" :y="w.size * 0.36" :font-size="w.size" :fill="w.fill" :font-weight="w.weight" :textLength="w.len" lengthAdjust="spacingAndGlyphs">{{ w.t }}</text>
              </g>
              <rect x="348" y="690" width="704" height="3" fill="#dadada" /><rect x="763" y="691" width="8" height="2" fill="#888" />
              <rect x="321" y="694" width="731" height="12" fill="#202020" />
              <rect x="705" y="696" width="22" height="10" fill="#303030" /><path d="M660 701h6v5h-6zM667 701h6v5h-6z" fill="#4cc2ee" /><path d="M688 702h10v4h-10z" fill="#eee" /><path d="M685 705h6v1h-6z" fill="#999" />
              <path d="M710 706a6 6 0 0 1 12 0z" fill="#d9453a" /><circle cx="716" cy="706" r="2.500" fill="#7db4f0" /><path d="M734 702h5l1 1h7v3h-13z" fill="#f2c33c" /><path d="M761 706l7-5 4 1.500v3.500zM759 704l3 2h-3z" fill="#2596d8" /><rect x="785" y="702" width="11" height="4" fill="#0b2b45" /><path d="M787 706v-2h3v2M792 705h3" stroke="#3aa7f0" fill="none" /><path d="M809 706l5.500-4 5.500 4z" fill="#999" /><rect x="833" y="701" width="14" height="5" fill="#2b63e0" /><path d="M837 706l2-3M841 706l2-3" stroke="#fff" stroke-width="1.500" />
            </svg>
          </article>
        </div>
      </div>
      <svg class="vscroll" width="17" height="571" viewBox="1349 135 17 571">
        <rect x="1349" y="135" width="17" height="571" fill="#d8dce4" /><rect x="1349" y="135" width="17" height="27" fill="#cdd0d5" />
        <rect x="1353" y="140" width="9" height="2" fill="#777" /><rect x="1350.500" y="145.500" width="15" height="15" fill="#f0f1f3" stroke="#888e96" />
        <path d="M1352.500 148.500h5l2 2v3h-4v-2h-3zM1356.500 157.500v-4h5l2-2v3l-3 3z" fill="#fff" stroke="#666" stroke-width=".9" />
        <path d="M1353 172.500h9l-4.500-4.500zM1353 644.500h9l-4.500 4.500z" fill="#444" />
        <rect x="1350.500" y="549.500" width="14" height="16" rx="1" fill="#f3f4f6" stroke="#8b919b" /><path d="M1354 554.500h7M1354 557.500h7M1354 560.500h7" stroke="#666" />
        <path d="M1349 654.500h17" stroke="#b5bbc8" /><path d="M1354 662h7l-3.500-3.500zM1354 665.500h7l-3.500-3.500z" fill="#444" /><circle cx="1357.500" cy="679.500" r="3" fill="#dfe2e8" stroke="#555" /><path d="M1354 694h7l-3.500 3.500zM1354 697.500h7l-3.500 3.500z" fill="#444" />
      </svg>
    </main>

    <footer class="status">
      <span class="st s-page"><em v-fit="72">Page: 76 of 92</em></span>
      <span class="st s-words"><em v-fit="67">Words: 4,549</em></span>
      <span class="st s-lang">
        <svg width="18" height="18" viewBox="183 708 18 18"><path d="M184 718l5-6 9 5-5 6.500z" fill="#f4f7fb" stroke="#8b98b0" /><path d="M184 719.500l8 4.500 6-6v2l-6 5.500-8-4.500z" fill="#3c6bc4" /><path d="M192.500 710l7 7M199.500 709.500l-7 8" stroke="#f04a1e" stroke-width="2" /></svg>
        <em v-fit="67">English (U.K.)</em>
      </span>
      <svg class="views" width="274" height="22" viewBox="1092 706 274 22" fill="none" stroke="#666">
        <path d="M1094.500 708v18" stroke="#8f959d" /><path d="M1095.500 708v18" stroke="#f5f6f8" />
        <rect x="1099.500" y="708.500" width="18" height="18" rx="2" fill="#fbe08a" stroke="#c88b28" /><path d="M1103.500 712.500h11v10h-11z" fill="#fff" /><path d="M1105 714.500h8M1105 716.500h8M1105 718.500h8M1105 720.500h8" />
        <path d="M1122.500 712.500l5 1.500 5-1.500v8l-5 2-5-2zM1127.500 714v8M1124 715.500h2M1124 717.500h2M1129 715.500h2M1129 717.500h2" /><path d="M1139.500 712.500h8v9h-8zM1141 714.500h5M1141 716.500h5M1141 718.500h5" /><circle cx="1148" cy="719.500" r="3" fill="#2e80b8" stroke="#286a98" /><path d="M1147 717l2 2-1 2" stroke="#5fd05a" />
        <path d="M1159 712.500h6M1162 715.500h7M1164 718.500h5M1161 721.500h7M1177 712.500h10M1177 715.500h10M1177 718.500h10M1177 721.500h10" stroke="#777" />
        <text x="1201" y="721.500" font-family="Open Sans" font-size="11.500" fill="#444" stroke="none" textLength="21">90%</text>
        <path d="M1246 717.500h100" stroke="#8f959d" /><path d="M1246 718.500h100" stroke="#f5f6f8" />
        <circle cx="1238" cy="717" r="7.300" fill="#f3f4f6" stroke="#777d86" /><path d="M1234 717h8" stroke="#555" stroke-width="1.800" /><circle cx="1354" cy="717" r="7.300" fill="#f3f4f6" stroke="#777d86" /><path d="M1350 717h8M1354 713v8" stroke="#555" stroke-width="1.800" />
        <path d="M1287.500 710.500h8v8l-4 4-4-4z" fill="#f6f7f9" stroke="#777d86" />
      </svg>
    </footer>

    <footer class="taskbar">
      <svg class="start" width="48" height="40" viewBox="0 728 48 40"><path d="M16 742.300l6.700-1v6.200H16zM23.700 741.200l8.300-1.200v7.500h-8.300zM16 748.500h6.700v6.200l-6.700-1zM23.700 748.500h8.300v7.500l-8.300-1.200z" fill="#000" /></svg>
      <div class="search">
        <svg width="20" height="20" viewBox="58 738 20 20" fill="none" stroke="#222" stroke-width="1.300"><circle cx="71" cy="745" r="5" /><path d="M67.500 748.500l-7 7" /></svg>
        <span v-fit="128">Type here to search</span>
      </div>
      <svg class="apps" width="392" height="40" viewBox="392 728 392 40">
        <circle cx="416" cy="748" r="6.800" fill="none" stroke="#111" stroke-width="2" />
        <path d="M457.500 744.500h9v7h-9zM456.500 740v2.500h11v-2.500M456.500 756v-2.500h11v2.500M470.500 740v2M470.500 747v8" fill="none" stroke="#111" /><rect x="469" y="743.500" width="3" height="3" fill="#111" />
        <defs><linearGradient id="eg" x1="0" y1="0" x2="1" y2=".4"><stop offset="0" stop-color="#1b9de2" /><stop offset=".6" stop-color="#35c1b1" /><stop offset="1" stop-color="#6fe04a" /></linearGradient></defs>
        <circle cx="515" cy="748" r="12" fill="#1479ce" />
        <path d="M503 747c1-7 6-11 12-11 7 0 12 5 12 11 0 4-3 6-6.500 6-3 0-4-1.500-3-2.500 1.500-2 .5-6-4-6.500-4-.5-8 1-10.500 3z" fill="url(#eg)" />
        <path d="M509 746c-2 6 1 12 9 13.500 3-.5 5.500-2 7-4-5 2-10 0-11-4-.6-2.600.4-4.500 1.500-5.500-3-1.500-5.500-1-6.500 0z" fill="#0b5797" />
        <path d="M527 750.500c-1 2.500-3.500 3.500-6.500 3-2.500 0-4-1-3-2.800 1.500-2 .5-4.500-1-5.200-2 2-2 6 1 8.500 3 2.300 6 2 8.300.7z" fill="#eee" opacity=".95" />
        <path d="M553 739h9l2 2h10.500v15.500H553z" fill="#e8a317" /><path d="M553 743h9l2-2h11v16h-22z" fill="#ffd25f" /><path d="M557 757v-8h14v8h-4v-4h-6v4z" fill="#3a96dd" /><rect x="544" y="766" width="40" height="2" fill="#0063b1" />
        <rect x="601" y="742" width="23" height="17" rx="1" fill="#000" /><path d="M608.500 744v-4q0-3 3-3t3 3v2M611 742v-2q0-3 3-3t3 3v2" fill="none" stroke="#000" stroke-width="1.200" /><rect x="607" y="745" width="5" height="5" fill="#f35325" /><rect x="613" y="745" width="5" height="5" fill="#81bc06" /><rect x="607" y="751" width="5" height="5" fill="#05a6f0" /><rect x="613" y="751" width="5" height="5" fill="#ffba08" />
        <path d="M650 744l12-7.500 12 7.500v15h-24z" fill="#1062b3" /><path d="M651.500 744h21l-10.500 6.500z" fill="#f5f5f5" /><path d="M650 744l12 7.500-12 7.500z" fill="#33bdf2" /><path d="M674 744l-12 7-12 8h24z" fill="#2aa7e8" /><path d="M650 744l24 15h-24z" fill="#3bc4f5" />
        <path d="M718 736l5 2.500v19l-5 2.500-12-9.500-5 4-2-1 5-5.500-5-5.500 2-1 5 4zM718 742.500l-7 5.500 7 5.500z" fill="#1f87cf" fill-rule="evenodd" /><path d="M718 736l5 2.500v19l-5 2.500z" fill="#2fa4ee" />
        <rect x="736" y="728" width="48" height="38" fill="#f9f9f9" /><rect x="736" y="766" width="48" height="2" fill="#0063b1" /><rect x="748.500" y="736.500" width="21" height="21" fill="#e9f0fa" stroke="#33589a" /><path d="M766.500 739v16" stroke="#a9bfe2" stroke-width="3" /><path d="M751 755.500h14" stroke="#8fa9d4" />
        <text x="750.500" y="752.500" font-family="Liberation Sans" font-weight="700" font-size="17" fill="#1f4fa5" textLength="15.500" lengthAdjust="spacingAndGlyphs">W</text><path d="M760 750l3 2 3-3 3 2v5h-5z" fill="#fff" />
      </svg>
      <svg class="tray" width="114" height="40" viewBox="1094 728 114 40" fill="none" stroke="#111">
        <path d="M1093.500 751.500l5.500-5.500 5.500 5.500" stroke-width="1.300" />
        <path d="M1118.500 752.500q-3-.5-3-3 0-2.500 3.500-3 1-4 5-4t4.500 3.500q3 .5 3 3.500t-3 3z" fill="#9a9a9a" /><path d="M1119 752.500q-3.500-1-2.500-3.500 2-2 4.500-1l4 2 5-1q1 3-2 3.500z" fill="#eee" stroke-width=".5" />
        <path d="M1140.500 744.500h13v8h-13zM1155 746.500v4" stroke-width="1.300" /><rect x="1142" y="746" width="4" height="5" fill="#111" stroke="none" />
        <path d="M1166.500 752q1-8 11-9M1169.500 753.500q1-6 8.500-7M1172.500 754q.5-4 5.500-4.500M1175.500 754l2.500-2" stroke-width="1.100" />
        <path d="M1187.500 746.500h2.500l4-3.500v11l-4-3.500h-2.500z" /><path d="M1196.500 745.500q2 3 0 5.500" /><path d="M1199 744q3 4.500 0 8.500M1201.500 742.500q3.500 6 0 11.500" stroke="#999" />
      </svg>
      <div class="two lang"><span v-fit="23">ENG</span><span v-fit="23">INTL</span></div>
      <div class="two clock"><span v-fit="27">04:37</span><span v-fit="58">26/11/2022</span></div>
      <svg class="note" width="46" height="40" viewBox="1320 728 46 40"><path d="M1325 740h16v13h-10l-3 3v-3h-3z" fill="#111" /><path d="M1328 743.500h10M1328 746.500h10M1328 749.500h6" stroke="#eee" /><circle cx="1340.500" cy="755" r="9" fill="#d0d0d0" stroke="#8a8a8a" /><text x="1340.500" y="759" text-anchor="middle" font-family="Open Sans" font-size="11" font-weight="600" fill="#111">21</text><path d="M1361.500 728v40" stroke="#c8c8c8" /></svg>
    </footer>
  </div>
</template>

<style>
html, body { margin: 0; overflow: hidden; }
</style>

<style scoped>
.word { width: 1366px; height: 768px; display: flex; flex-direction: column; background: #fff; font-family: "Open Sans", "Noto Sans", sans-serif; font-size: 11.500px; color: #333; line-height: 16px; overflow: hidden; }
.word svg { display: block; flex: none; }
.word span, .word em, .word b { white-space: pre; font-style: normal; font-weight: 400; flex: none; }
.word .semi { font-weight: 600; }
.top { height: 48px; position: relative; border-bottom: 1px solid #a5abb2; flex: none; }
.titlebar { height: 25px; display: flex; align-items: center; }
.doc-title { margin-left: 44px; margin-top: 1px; color: #111; }
.winctl { margin-left: auto; margin-right: 12px; }
.tabs { height: 23px; display: flex; align-items: stretch; color: #444; }
.file { width: 56px; display: flex; justify-content: center; align-items: center; padding-top: 1px; box-sizing: border-box; color: #fff; background: linear-gradient(#2f6cc0, #1f55aa 50%, #3f86de); border-radius: 3px 3px 0 0; }
.home { width: 55px; margin-left: 4px; display: flex; justify-content: center; align-items: center; background: #fff; border: 1px solid #b3b8be; border-bottom: 0; border-radius: 3px 3px 0 0; margin-bottom: -1px; position: relative; z-index: 1; }
.tab { display: flex; justify-content: center; align-items: center; flex: none; padding-top: 1px; box-sizing: border-box; }
.help { margin-left: auto; }
.pictools { position: absolute; left: 540px; top: 0; width: 77px; height: 48px; border: solid; border-width: 0 1px; border-image: linear-gradient(#d8258f, #e889bd 60%, #fff) 1; background: linear-gradient(#c8007a 4px, #ea7db5 4px, #f5b4d5 25px, #fff 44px); display: flex; flex-direction: column; align-items: center; }
.pt { margin-top: 7px; color: #fff; text-shadow: 0 0 2px #a03070, 0 1px 2px #a03070; }
.fm { margin-top: 6px; color: #444; }
.ribbon { height: 85px; flex: none; display: flex; background: linear-gradient(#fff, #fdfdfd 55%, #e7eaee); border-bottom: 1px solid #868c94; }
.group { position: relative; display: flex; flex-direction: column; border-right: 1px solid #cfd3d8; box-sizing: border-box; flex: none; }
.clip { width: 152px; } .font { width: 268px; } .para { width: 228px; } .styles { width: 579px; } .edit { width: 75px; }
.body { height: 68px; display: flex; }
.body.col { flex-direction: column; }
.glabel { display: flex; justify-content: center; color: #616b7a; line-height: 18px; padding-right: 20px; }
.edit .glabel { padding-right: 0; }
.launch { position: absolute; right: 5px; bottom: 4px; }
.paste { width: 48px; display: flex; flex-direction: column; align-items: center; padding-top: 4px; }
.paste span { margin-top: 3px; margin-bottom: 3px; }
.cmds { display: flex; flex-direction: column; padding: 2px 0 0 1px; }
.edit .cmds { padding-left: 7px; }
.cmd { height: 22px; display: flex; align-items: center; }
.cmd svg { margin-right: 3px; }
.edit .cmd svg { margin-right: 4px; }
.car { border: solid transparent; border-width: 3px 3px 0; border-top-color: #666; width: 0; height: 0; margin-left: 5px; flex: none; }
.font .body { padding-left: 4px; }
.frow { display: flex; align-items: center; padding-top: 9px; height: 24px; margin-bottom: 2px; }
.combo { height: 20px; border: 1px solid #cfd2d6; background: #fff; display: flex; align-items: center; justify-content: space-between; padding: 0 4px 0 2px; color: #222; box-sizing: content-box; }
.c1 { width: 90px; } .c2 { width: 36px; padding-left: 3px; border-left: 0; margin-right: 1px; }
.para .body { padding-top: 7px; height: 61px; }
.styles .body { padding-left: 6px; }
.gallery { margin-top: 5px; width: 519px; height: 58px; border: 1px solid #c5c9ce; background: #fff; display: flex; }
.sitem { width: 72px; display: flex; flex-direction: column; align-items: center; flex: none; }
.swatch { width: 64px; height: 32px; margin-top: 5px; background: #f5f1f8; overflow: hidden; display: flex; align-items: center; box-sizing: border-box; border-right: 3px solid #f5f1f8; }
.swatch span { margin-left: 3px; font-family: "Liberation Serif", serif; color: #757575; }
.s1 { font-size: 20px; } .word .s3 { font-size: 19px; font-weight: 700; } .s4 { font-size: 16.500px; }
.swatch .big { margin-left: 2px; margin-top: -6px; }
.slabel { color: #9a9a9a; line-height: 15px; }
.gscroll { width: 14px; margin-left: auto; display: flex; flex-direction: column; border-left: 1px solid #c5c9ce; }
.gb { flex: 1; display: flex; align-items: center; justify-content: center; border-top: 1px solid #c5c9ce; }
.gb:first-child { border-top: 0; }
.change { width: 52px; display: flex; flex-direction: column; align-items: center; padding-top: 6px; line-height: 13px; }
.change > span { margin-top: 4px; } .change > .chl { margin-top: 0; display: flex; align-items: center; }
.work { height: 571px; position: relative; display: grid; grid-template-columns: 1349px 17px; grid-template-rows: 27px 544px; background: #cdd0d5; flex: none; }
.ruler { grid-column: 1; grid-row: 1; }
.canvas { grid-column: 1; grid-row: 2; display: flex; }
.vscroll { grid-column: 2; grid-row: 1 / 3; }
.vruler { width: 24px; background: #cdd1d6; }
.desk { flex: 1; background: linear-gradient(#c9ccd1, #b8bbc0); overflow: hidden; }
.page { margin-left: 297px; width: 731px; height: 544px; background: #fff; box-shadow: 0 0 0 1px #979ca4, 0 0 8px 2px #8d929a; }
h1 { margin: 0; height: 73px; padding: 35px 0 0 29px; box-sizing: border-box; font: 400 18px/22px "Liberation Serif", serif; color: #000; }
h1 span { text-decoration: underline; display: inline-block; }
.shot { filter: blur(.3px); }
.status { height: 22px; flex: none; display: flex; background: linear-gradient(#e4e7ea, #cdd1d6 50%, #c0c4ca); border-top: 1px solid #868c94; box-sizing: border-box; color: #3c3c3c; }
.st { display: flex; align-items: center; border-right: 1px solid #7f858d; box-shadow: 1px 0 #f0f2f4; box-sizing: border-box; }
.s-page { width: 90px; padding-left: 8px; } .s-words { width: 86px; padding-left: 9px; } .s-lang { width: 118px; padding-left: 7px; }
.s-lang svg { margin-right: 16px; }
.views { margin-left: auto; margin-top: -1px; }
.taskbar { height: 40px; flex: none; display: flex; background: #eee; color: #111; }
.search { width: 344px; height: 40px; box-sizing: border-box; background: #fff; border: 1px solid #c8c8c8; display: flex; align-items: center; padding-left: 9px; font-size: 14.500px; color: #333; }
.search span { margin-left: 10px; }
.tray { margin-left: 310px; overflow: visible; }
.two { display: flex; flex-direction: column; justify-content: center; line-height: 18px; }
.lang { margin-left: 5px; width: 24px; }
.clock { margin-left: 10px; width: 62px; align-items: center; }
.note { margin-left: auto; }
</style>
